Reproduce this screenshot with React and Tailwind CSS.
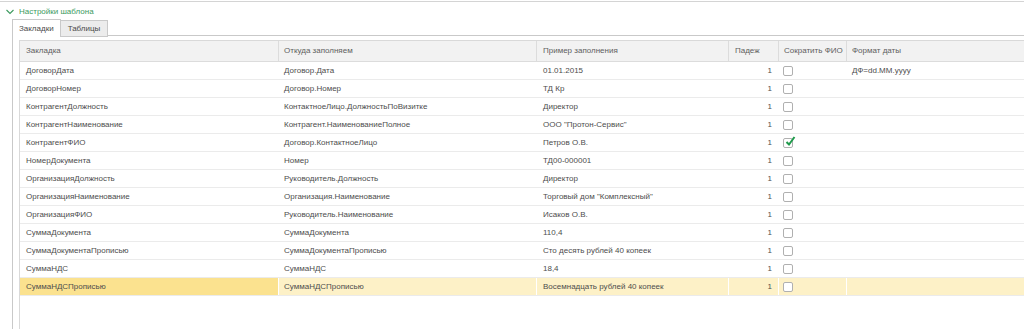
import React from 'react';

const rows = [
  ['ДоговорДата', 'Договор.Дата', '01.01.2015', false, 'ДФ=dd.MM.yyyy'],
  ['ДоговорНомер', 'Договор.Номер', 'ТД Кр', false, ''],
  ['КонтрагентДолжность', 'КонтактноеЛицо.ДолжностьПоВизитке', 'Директор', false, ''],
  ['КонтрагентНаименование', 'Контрагент.НаименованиеПолное', 'ООО "Протон-Сервис"', false, ''],
  ['КонтрагентФИО', 'Договор.КонтактноеЛицо', 'Петров О.В.', true, ''],
  ['НомерДокумента', 'Номер', 'ТД00-000001', false, ''],
  ['ОрганизацияДолжность', 'Руководитель.Должность', 'Директор', false, ''],
  ['ОрганизацияНаименование', 'Организация.Наименование', 'Торговый дом "Комплексный"', false, ''],
  ['ОрганизацияФИО', 'Руководитель.Наименование', 'Исаков О.В.', false, ''],
  ['СуммаДокумента', 'СуммаДокумента', '110,4', false, ''],
  ['СуммаДокументаПрописью', 'СуммаДокументаПрописью', 'Сто десять рублей 40 копеек', false, ''],
  ['СуммаНДС', 'СуммаНДС', '18,4', false, ''],
  ['СуммаНДСПрописью', 'СуммаНДСПрописью', 'Восемнадцать рублей 40 копеек', false, ''],
];

const cols = 'grid grid-cols-[259px_258px_192px_50px_68px_1fr]';

const Checkbox = ({ checked }) => (
  <div className="relative w-[10px] h-[10px] rounded-[2px] border border-[#b0b0b0] bg-white">
    {checked && (
      <svg className="absolute left-[1px] top-[-3px]" width="11" height="11" viewBox="0 0 11 11">
        <path d="M1.5 6 L4 8.5 L9.5 1" fill="none" stroke="#1f9a4b" strokeWidth="2" />
      </svg>
    )}
  </div>
);

export default function App() {
  return (
    <div className="w-[1024px] h-[329px] bg-white overflow-hidden font-['Liberation_Sans',Arial,sans-serif] text-[8px] text-[#555]">
      <div className="mt-[1px] h-px bg-[#d4d4d4]" />

      {/* Настройки шаблона */}
      <div className="flex items-center gap-[5px] pl-[6px] h-[17px] pt-[2px] text-[#3b9a5e]">
        <svg width="8" height="6" viewBox="0 0 8 6">
          <path d="M0.5 1 L4 4.5 L7.5 1" fill="none" stroke="#3b9a5e" strokeWidth="1.1" />
        </svg>
        <span>Настройки шаблона</span>
      </div>

      {/* Вкладки */}
      <div className="flex pl-[12px] h-[17px]">
        <div className="flex items-center px-[6px] bg-white border border-b-0 border-[#c9c9c9] text-[#4a4a4a] relative z-10 h-[18px]">Закладки</div>
        <div className="flex items-center px-[7px] mt-[1px] bg-[#ececec] border border-l-0 border-[#c9c9c9] text-[#4a4a4a] h-[17px]">Таблицы</div>
        <div className="flex-1 border-b border-[#c9c9c9]" />
      </div>

      <div className="ml-[12px] border-l border-[#c9c9c9] pl-[6px] pt-[4px] h-[300px]">
        <div className="border-l border-t border-[#d9d9d9] h-full">
          <div className={`${cols} h-[21px] bg-[#f2f2f2] border-b border-[#dcdcdc] text-[#5e5e5e]`}>
            <div className="flex items-center pl-[6px] border-r border-[#dcdcdc]">Закладка</div>
            <div className="flex items-center pl-[5px] border-r border-[#dcdcdc]">Откуда заполняем</div>
            <div className="flex items-center pl-[6px] border-r border-[#dcdcdc]">Пример заполнения</div>
            <div className="flex items-center pl-[6px] border-r border-[#dcdcdc]">Падеж</div>
            <div className="flex items-center pl-[5px] border-r border-[#dcdcdc]">Сократить ФИО</div>
            <div className="flex items-center pl-[5px]">Формат даты</div>
          </div>
          {rows.map((r, i) => {
            const sel = i === rows.length - 1;
            return (
              <div key={i} className={`${cols} h-[18px] border-b border-[#ebebeb] ${sel ? 'bg-[#fdf1c7]' : 'bg-white'} text-[#4d4d4d]`}>
                <div className={`flex items-center pl-[6px] border-r border-white ${sel ? 'bg-[#fbe28f]' : ''}`}>{r[0]}</div>
                <div className="flex items-center pl-[5px] border-r border-white">{r[1]}</div>
                <div className="flex items-center pl-[6px] border-r border-white">{r[2]}</div>
                <div className="flex items-center justify-end pr-[6px] border-r border-white">1</div>
                <div className="flex items-center pl-[4px] border-r border-white">
                  <Checkbox checked={r[3]} />
                </div>
                <div className="flex items-center pl-[5px]">{r[4]}</div>
              </div>
            );
          })}
        </div>
      </div>
    </div>
  );
}
